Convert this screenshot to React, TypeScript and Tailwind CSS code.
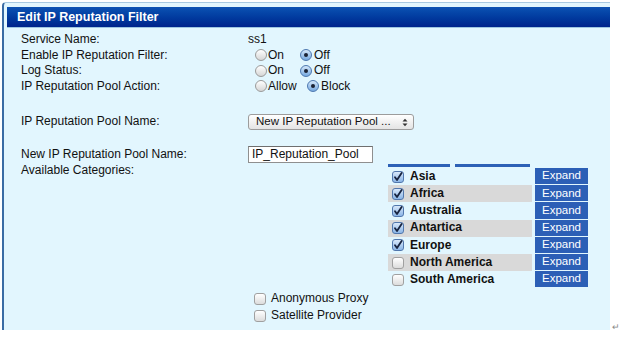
import React from 'react';

// 地区列表：checked 表示默认勾选
const REGIONS = [
  { name: 'Asia', checked: true },
  { name: 'Africa', checked: true },
  { name: 'Australia', checked: true },
  { name: 'Antartica', checked: true },
  { name: 'Europe', checked: true },
  { name: 'North America', checked: false },
  { name: 'South America', checked: false },
];

function Radio({ on }: { on: boolean }) {
  return on ? (
    <span className="w-[12px] h-[12px] rounded-full border border-[#4d78b0] bg-gradient-to-b from-[#d4e7fa] to-[#77a9df] flex items-center justify-center shrink-0">
      <span className="w-[4px] h-[4px] rounded-full bg-[#1b2233]" />
    </span>
  ) : (
    <span className="w-[12px] h-[12px] rounded-full border border-[#9a9a9a] bg-gradient-to-b from-white to-[#d6d6d6] shrink-0" />
  );
}

function Check({ on }: { on: boolean }) {
  if (!on) {
    return <span className="w-[12px] h-[12px] rounded-[3px] border border-[#a0a0a0] bg-gradient-to-b from-white to-[#dcdcdc] shrink-0" />;
  }
  return (
    <span className="w-[12px] h-[12px] rounded-[3px] border border-[#5177ad] bg-gradient-to-b from-[#d8e8fa] to-[#8bb5e6] flex items-center justify-center shrink-0">
      <svg width="10" height="10" viewBox="0 0 10 10">
        <path d="M2 5.2 L4 8 L8.6 1" fill="none" stroke="#17233f" strokeWidth="1.8" strokeLinecap="round" strokeLinejoin="round" />
      </svg>
    </span>
  );
}

function RadioPair({ a, b, aOn, wA }: { a: string; b: string; aOn: boolean; wA: string }) {
  return (
    <div className="flex items-center pl-[7px]">
      <span className={`flex items-center gap-[1px] ${wA}`}>
        <Radio on={aOn} />
        <span>{a}</span>
      </span>
      <span className="flex items-center gap-[2px]">
        <Radio on={!aOn} />
        <span>{b}</span>
      </span>
    </div>
  );
}

export default function App() {
  return (
    <div className="w-[620px] h-[337px] bg-white flex items-start font-['Liberation_Sans',Arial,sans-serif] text-[12px] text-[#111]">
      <div className="ml-[2px] mt-[2px] w-[610px] h-[328px] bg-[#e2f6fe] border-t border-[#a7c9e2] border-l-2 border-l-[#3a6ca4] rounded-tl-[4px] flex flex-col">
        {/* 标题栏 */}
        <div className="ml-[3px] mt-[4px] h-[21px] bg-gradient-to-b from-[#0d52b3] to-[#00238c] border-b border-[#9ec6e0] text-white font-bold text-[12.5px] leading-[20px] pl-[10px]">
          Edit IP Reputation Filter
        </div>

        <div className="pl-[17px] mt-[4px] leading-[15.5px]">
          <div className="flex">
            <div className="w-[227px]">Service Name:</div>
            <div>ss1</div>
          </div>
          <div className="flex">
            <div className="w-[227px]">Enable IP Reputation Filter:</div>
            <RadioPair a="On" b="Off" aOn={false} wA="w-[45px]" />
          </div>
          <div className="flex">
            <div className="w-[227px]">Log Status:</div>
            <RadioPair a="On" b="Off" aOn={false} wA="w-[45px]" />
          </div>
          <div className="flex">
            <div className="w-[227px]">IP Reputation Pool Action:</div>
            <RadioPair a="Allow" b="Block" aOn={false} wA="w-[52px]" />
          </div>

          <div className="flex items-center mt-[20px] h-[16px]">
            <div className="w-[227px]">IP Reputation Pool Name:</div>
            <div className="w-[166px] h-[16px] rounded-[3px] border border-[#9c9c9c] bg-gradient-to-b from-white to-[#e4e4e4] flex items-center justify-between pl-[7px] pr-[5px] text-[11.5px]">
              <span>New IP Reputation Pool ...</span>
              <svg width="6" height="9" viewBox="0 0 6 9">
                <path d="M0.5 3.5 L3 0.8 L5.5 3.5 Z M0.5 5.5 L3 8.2 L5.5 5.5 Z" fill="#333" />
              </svg>
            </div>
          </div>

          <div className="flex items-center mt-[16px] h-[17px]">
            <div className="w-[227px]">New IP Reputation Pool Name:</div>
            <div className="w-[125px] h-[17px] bg-white border border-[#8f8f8f] border-t-[#6f6f6f] pl-[3px] leading-[15px] text-[12px]">
              IP_Reputation_Pool
            </div>
          </div>

          <div className="flex">
            <div className="w-[227px]">Available Categories:</div>
            <div className="ml-[140px] mt-[1px]">
              <div className="flex h-[4px] gap-[5px]">
                <div className="w-[62px] h-[3px] bg-[#2d61b6]" />
                <div className="w-[75px] h-[3px] bg-[#2d61b6]" />
              </div>
              {REGIONS.map((r, i) => (
                <div key={r.name} className="flex h-[17.2px]">
                  <div className={`w-[144px] flex items-center gap-[6px] pl-[4px] font-bold ${i % 2 === 1 ? 'bg-[#d9d9d9]' : ''}`}>
                    <Check on={r.checked} />
                    <span>{r.name}</span>
                  </div>
                  <div className="ml-[3px] w-[53px] h-[16.2px] bg-[#2c5fb6] text-white text-[11.5px] flex items-center justify-center">
                    Expand
                  </div>
                </div>
              ))}
            </div>
          </div>

          <div className="pl-[233px] mt-[2px] leading-[17px]">
            <div className="flex items-center gap-[5px]">
              <Check on={false} />
              <span>Anonymous Proxy</span>
            </div>
            <div className="flex items-center gap-[5px]">
              <Check on={false} />
              <span>Satellite Provider</span>
            </div>
          </div>
        </div>
      </div>
      <span className="self-end mb-[5px] ml-[2px] text-[9px] text-[#888] leading-none">↵</span>
    </div>
  );
}
